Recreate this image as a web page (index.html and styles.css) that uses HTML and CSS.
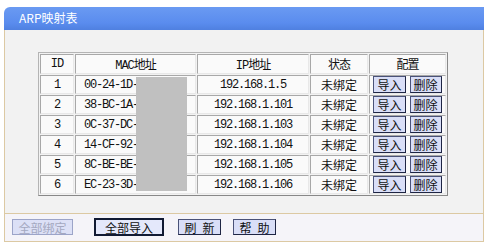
FILE: index.html
```html
<!DOCTYPE html>
<html lang="zh-CN">
<head>
    <meta charset="UTF-8">
    <title>ARP映射表</title>
    <link rel="stylesheet" href="styles.css">
</head>
<body>
    <div class="panel">
        <div class="panel-title">ARP映射表</div>
        <div class="panel-body">
            <div class="table-wrap">
                <table class="arp-table">
                    <thead>
                        <tr>
                            <th class="col-id">ID</th>
                            <th class="col-mac">MAC地址</th>
                            <th class="col-ip">IP地址</th>
                            <th class="col-state">状态</th>
                            <th class="col-cfg">配置</th>
                        </tr>
                    </thead>
                    <tbody>
                        <tr>
                            <td class="num">1</td>
                            <td class="mac">00-24-1D-</td>
                            <td class="num">192.168.1.5</td>
                            <td>未绑定</td>
                            <td class="cfg"><button class="btn">导入</button><button class="btn">删除</button></td>
                        </tr>
                        <tr>
                            <td class="num">2</td>
                            <td class="mac">38-BC-1A-</td>
                            <td class="num">192.168.1.101</td>
                            <td>未绑定</td>
                            <td class="cfg"><button class="btn">导入</button><button class="btn">删除</button></td>
                        </tr>
                        <tr>
                            <td class="num">3</td>
                            <td class="mac">0C-37-DC-</td>
                            <td class="num">192.168.1.103</td>
                            <td>未绑定</td>
                            <td class="cfg"><button class="btn">导入</button><button class="btn">删除</button></td>
                        </tr>
                        <tr>
                            <td class="num">4</td>
                            <td class="mac">14-CF-92-</td>
                            <td class="num">192.168.1.104</td>
                            <td>未绑定</td>
                            <td class="cfg"><button class="btn">导入</button><button class="btn">删除</button></td>
                        </tr>
                        <tr>
                            <td class="num">5</td>
                            <td class="mac">8C-BE-BE-</td>
                            <td class="num">192.168.1.105</td>
                            <td>未绑定</td>
                            <td class="cfg"><button class="btn">导入</button><button class="btn">删除</button></td>
                        </tr>
                        <tr>
                            <td class="num">6</td>
                            <td class="mac">EC-23-3D-</td>
                            <td class="num">192.168.1.106</td>
                            <td>未绑定</td>
                            <td class="cfg"><button class="btn">导入</button><button class="btn">删除</button></td>
                        </tr>
                    </tbody>
                </table>
                <div class="redact"></div>
            </div>
        </div>
        <div class="panel-foot">
            <button class="btn btn-wide" disabled>全部绑定</button>
            <button class="btn btn-wide btn-default">全部导入</button>
            <button class="btn btn-small">刷&ensp;新</button>
            <button class="btn btn-small">帮&ensp;助</button>
        </div>
    </div>
</body>
</html>
```

FILE: styles.css
```css
body {
    margin: 0;
    background: #ffffff;
    font-family: "Noto Sans CJK SC", "DejaVu Sans", sans-serif;
    font-size: 12px;
    color: #111;
}

.panel {
    margin: 7px 0 0 4px;
    width: 480px;
}

.panel-title {
    height: 23px;
    line-height: 21px;
    padding-left: 15px;
    color: #fff;
    font-size: 12px;
    background: linear-gradient(#6a9af2, #5a8cee 70%, #4f80e0);
    border-top-left-radius: 6px;
}

.panel-body {
    height: 183px;
    box-sizing: border-box;
    padding: 22px 0 0 33px;
    background: #f2f2f2;
    border-left: 1px solid #dcc9a3;
    border-right: 1px solid #dcc9a3;
}

.table-wrap {
    position: relative;
    width: 410px;
}

.arp-table {
    width: 410px;
    border-collapse: separate;
    border-spacing: 1px;
    border: 1px solid #b4b4b4;
    border-right-color: #888;
    border-bottom-color: #888;
    background: #f2f2f2;
    table-layout: fixed;
}

.arp-table th,
.arp-table td {
    height: 16px;
    padding: 0;
    border: 1px solid #a8a8a8;
    border-right-color: #e8e8e8;
    border-bottom-color: #e8e8e8;
    background: #fafafa;
    text-align: center;
    font-weight: normal;
    white-space: nowrap;
}

.col-id { width: 32px; }
.col-mac { width: 119px; }
.col-ip { width: 110px; }
.col-state { width: 56px; }

.arp-table th {
    font-family: "Liberation Mono", "Noto Sans CJK SC", monospace;
    letter-spacing: -1px;
}

.arp-table .num,
.arp-table .mac {
    font-family: "Liberation Mono", monospace;
    font-size: 12px;
    letter-spacing: -1.2px;
}

.arp-table .mac {
    text-align: left;
    padding-left: 8px;
}

.cfg .btn {
    margin: 0 2px;
}

.btn {
    height: 17px;
    padding: 0 3px;
    font-family: "Noto Sans CJK SC", sans-serif;
    font-size: 12px;
    line-height: 13px;
    color: #111;
    background: #d9def7;
    border: 1px solid #4a5278;
    border-right-color: #1e2544;
    border-bottom-color: #1e2544;
    cursor: pointer;
}

.redact {
    position: absolute;
    left: 98px;
    top: 25px;
    width: 51px;
    height: 114px;
    background: #c0c0c0;
}

.panel-foot {
    height: 29px;
    box-sizing: border-box;
    padding: 5px 0 0 7px;
    background: #f5f4f9;
    border: 1px solid #dcc9a3;
    display: flex;
    align-items: flex-start;
}

.btn-wide {
    width: 61px;
    height: 16px;
    margin-right: 21px;
}

.btn-wide + .btn-wide {
    width: 70px;
    margin-right: 14px;
}

.btn-small {
    width: 43px;
    height: 16px;
    margin-right: 12px;
}

.btn[disabled] {
    color: #a4a8c0;
    background: #dce0f6;
    border-color: #9ca4c8;
}

.btn-default {
    height: 18px;
    margin-top: -1px;
    border: 2px solid #111a33;
    background: #e4e8fb;
}
```
